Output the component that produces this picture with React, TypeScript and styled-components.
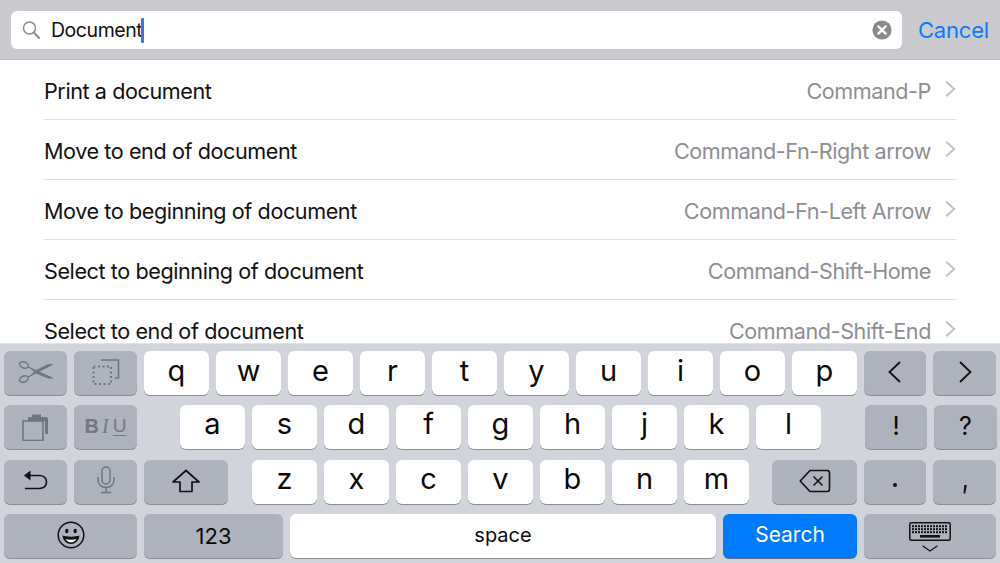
import React from "react";
import styled, { createGlobalStyle } from "styled-components";

const Global = createGlobalStyle`
  html, body { margin: 0; padding: 0; background: #fff; }
  #root { width: 1000px; height: 563px; overflow: hidden; }
  * { box-sizing: border-box; }
`;

const FONT = `Inter, "Liberation Sans", Arial, sans-serif`;

const Page = styled.div`
  width: 1000px;
  height: 563px;
  display: flex;
  flex-direction: column;
  overflow: hidden;
  font-family: ${FONT};
  color: #000;
`;

const SearchBar = styled.div`
  flex: 0 0 60px;
  height: 60px;
  background: #c9c9ce;
  border-bottom: 1px solid #bdbdc2;
  padding: 11px 0 10px 11px;
  display: flex;
  align-items: flex-start;
`;

const Field = styled.div`
  flex: 0 0 891px;
  height: 38px;
  background: #fff;
  border-radius: 6px;
  display: flex;
  align-items: center;
  padding: 0 10px 0 11px;
`;

const Query = styled.span`
  margin-left: 11px;
  font-size: 19.5px;
  letter-spacing: -0.45px;
  line-height: 24px;
  color: #111;
`;

const Caret = styled.span`
  width: 3px;
  height: 25px;
  background: #3f6ff0;
  border-radius: 1px;
  margin-left: -1px;
`;

const Clear = styled.span`
  margin-left: auto;
  display: flex;
`;

const Cancel = styled.span`
  margin-left: 16px;
  font-size: 22px;
  line-height: 38px;
  color: #0a7aff;
  letter-spacing: -0.2px;
`;

const List = styled.div`
  flex: 1 1 auto;
  min-height: 0;
  overflow: hidden;
  padding-left: 44px;
  padding-right: 44px;
  background: #fff;
`;

const Row = styled.div`
  height: 60px;
  display: flex;
  align-items: center;
  border-bottom: 1px solid #e1e1e3;
  padding-top: 2px;
`;

const RowTitle = styled.span`
  font-size: 21.6px;
  letter-spacing: -0.42px;
  color: #111;
`;

const RowValue = styled.span`
  margin-left: auto;
  font-size: 21.6px;
  letter-spacing: -0.42px;
  color: #8e8e93;
`;

const Chevron = styled.span`
  display: flex;
  margin-left: 14px;
  position: relative;
  top: -2px;
`;

const Keyboard = styled.div`
  flex: 0 0 220px;
  height: 220px;
  background: #d1d5db;
  border-top: 1px solid #e2e3e6;
  padding: 7px 4px 5px;
  display: flex;
  flex-direction: column;
  gap: 10.3px;
`;

const KeyRow = styled.div`
  display: flex;
  height: 44px;
`;

const Group = styled.div<{ $ml?: number; $gap?: number }>`
  display: flex;
  gap: ${(p) => p.$gap ?? 7}px;
  margin-left: ${(p) => p.$ml ?? 0}px;
`;

const Key = styled.div<{ $w: number; $dark?: boolean; $blue?: boolean; $size?: number; $pb?: number }>`
  width: ${(p) => p.$w}px;
  height: 44px;
  border-radius: 6px;
  display: flex;
  align-items: center;
  justify-content: center;
  font-size: ${(p) => p.$size ?? 29}px;
  font-weight: 400;
  color: ${(p) => (p.$blue ? "#fff" : "#0a0a0a")};
  background: ${(p) => (p.$blue ? "#007aff" : p.$dark ? "#adb2bc" : "#fff")};
  box-shadow: 0 1px 0 ${(p) => (p.$blue ? "#5f6b80" : "#8b8d92")};
  padding-bottom: ${(p) => p.$pb ?? 5}px;
`;

const Faded = styled.span`
  display: flex;
  opacity: 0.95;
`;

const Row1Letters = "qwertyuiop".split("");
const Row2Letters = "asdfghjkl".split("");
const Row3Letters = "zxcvbnm".split("");

const rows: [string, string][] = [
  ["Print a document", "Command-P"],
  ["Move to end of document", "Command-Fn-Right arrow"],
  ["Move to beginning of document", "Command-Fn-Left Arrow"],
  ["Select to beginning of document", "Command-Shift-Home"],
  ["Select to end of document", "Command-Shift-End"],
];

const Lens = () => (
  <svg width="18" height="20" viewBox="0 0 18 20" fill="none" stroke="#8a8a8e" strokeWidth="1.5">
    <circle cx="7.5" cy="8" r="6" />
    <path d="M11.8 12.4 L17 18" strokeWidth="1.9" strokeLinecap="round" />
  </svg>
);

const ClearIcon = () => (
  <svg width="20" height="20" viewBox="0 0 20 20">
    <circle cx="10" cy="10" r="9.6" fill="#8a8a8e" />
    <path d="M6.4 6.4 L13.6 13.6 M13.6 6.4 L6.4 13.6" stroke="#fff" strokeWidth="2.4" strokeLinecap="round" />
  </svg>
);

const ChevronIcon = () => (
  <svg width="11" height="16" viewBox="0 0 11 16" fill="none" stroke="#c4c4c8" strokeWidth="2">
    <path d="M1.2 0.8 L9.2 8 L1.2 15.2" />
  </svg>
);

const Scissors = () => (
  <svg width="36" height="24" viewBox="0 0 36 24" fill="none" stroke="#71757f" strokeWidth="1.5">
    <ellipse cx="6" cy="5" rx="4.6" ry="2.9" transform="rotate(22 6 5)" />
    <ellipse cx="6" cy="19" rx="4.6" ry="2.9" transform="rotate(-22 6 19)" />
    <path d="M10.3 7 L34.5 18 L30 18 L17 12.6" strokeWidth="1" fill="#71757f" />
    <path d="M10.3 17 L34.5 4.5 L30 4.8 L17 11" strokeWidth="1" fill="#71757f" />
  </svg>
);

const CopyIcon = () => (
  <svg width="28" height="28" viewBox="0 0 28 28" fill="none" stroke="#71757f">
    <path d="M9 2 H26.5 V20 H23" strokeWidth="1.5" />
    <rect x="1.5" y="8.5" width="17.5" height="17.5" strokeWidth="2" strokeDasharray="2 2.5" />
  </svg>
);

const PasteIcon = () => (
  <svg width="27" height="28" viewBox="0 0 27 28" fill="none">
    <path d="M6 4 H10 V1.5 H19 V4 H24 C25.5 4 26 5 26 6 V21 H23 V8 H6 Z" fill="#71757f" />
    <rect x="1" y="8" width="20" height="19.5" stroke="#71757f" strokeWidth="1.6" fill="#adb2bc" />
  </svg>
);

const BoldLetter = styled.span`
  font-family: "Liberation Sans", Arial, sans-serif;
  font-weight: 700;
  font-size: 20px;
  color: #71757f;
`;
const ItalicLetter = styled.span`
  font-family: "Liberation Serif", serif;
  font-style: italic;
  font-size: 20px;
  margin: 0 4px 0 3px;
  color: #71757f;
`;
const UnderLetter = styled.span`
  font-family: "Liberation Sans", Arial, sans-serif;
  font-size: 19px;
  color: #71757f;
  text-decoration: underline;
  text-underline-offset: 3px;
  text-decoration-thickness: 1px;
`;

const Undo = () => (
  <svg width="26" height="24" viewBox="0 0 26 24" fill="none" stroke="#111" strokeWidth="1.6">
    <path d="M2 20.5 H16 C21 20.5 23.5 17.5 23.5 14 C23.5 10.5 21 7.5 16 7.5 H5" />
    <path d="M1 7.5 L7.5 2.5 V12.5 Z" fill="#111" stroke="none" />
  </svg>
);

const Mic = () => (
  <svg width="18" height="28" viewBox="0 0 18 28" fill="none" stroke="#71757f" strokeWidth="1.5">
    <rect x="5" y="1" width="8" height="17" rx="4" />
    <path d="M1 11 V14 C1 19 5 21.5 9 21.5 C13 21.5 17 19 17 14 V11" />
    <path d="M9 21.5 V26.5 M4 26.5 H14" />
  </svg>
);

const Shift = () => (
  <svg width="28" height="24" viewBox="0 0 28 24" fill="none" stroke="#111" strokeWidth="1.7" strokeLinejoin="round">
    <path d="M14 1.5 L27 13 H20 V22.5 H8 V13 H1 Z" />
  </svg>
);

const Smiley = () => (
  <svg width="28" height="28" viewBox="0 0 28 28" fill="none" stroke="#111" strokeWidth="1.5">
    <circle cx="14" cy="14" r="12.8" />
    <ellipse cx="9.8" cy="10" rx="1.7" ry="2.2" fill="#111" stroke="none" />
    <ellipse cx="18.2" cy="10" rx="1.7" ry="2.2" fill="#111" stroke="none" />
    <path d="M5.5 14.5 C9 16 19 16 22.5 14.5 C22 20 18 23 14 23 C10 23 6 20 5.5 14.5 Z" fill="#111" stroke="none" />
    <path d="M8.5 18 C11 19 17 19 19.5 18 C18 20.5 16 21.3 14 21.3 C12 21.3 10 20.5 8.5 18 Z" fill="#fff" stroke="none" />
  </svg>
);

const Angle = ({ right }: { right?: boolean }) => (
  <svg width="14" height="22" viewBox="0 0 14 22" fill="none" stroke="#111" strokeWidth="1.8">
    <path d={right ? "M2 1 L12.5 11 L2 21" : "M12 1 L1.5 11 L12 21"} />
  </svg>
);

const Backspace = () => (
  <svg width="32" height="24" viewBox="0 0 32 24" fill="none" stroke="#111" strokeWidth="1.6" strokeLinejoin="round">
    <path d="M11 1.5 H28 C29.5 1.5 30.5 2.5 30.5 4 V20 C30.5 21.5 29.5 22.5 28 22.5 H11 L1.2 12 Z" />
    <path d="M14.5 7.5 L23.5 16.5 M23.5 7.5 L14.5 16.5" strokeWidth="1.5" />
  </svg>
);

const Period = styled.span`
  width: 4px;
  height: 4px;
  border-radius: 50%;
  background: #111;
  display: block;
  margin-top: 12px;
`;

const CommaMark = styled.svg`
  margin-top: 20px;
`;

const Comma = () => (
  <CommaMark width="4" height="9" viewBox="0 0 4 9">
    <path d="M1.3 0 H3.8 L2.2 8.5 H0.5 Z" fill="#111" />
  </CommaMark>
);

const Dismiss = styled.span`
  display: flex;
  flex-direction: column;
  align-items: center;
  gap: 4px;
  margin-top: 3px;
`;

const KeyboardGlyph = () => {
  const cells: React.ReactNode[] = [];
  for (let r = 0; r < 3; r++) {
    for (let c = 0; c < 12; c++) {
      cells.push(<rect key={`${r}-${c}`} x={3 + c * 3} y={3.2 + r * 3} width="2" height="2" fill="#111" />);
    }
  }
  return (
    <svg width="42" height="19" viewBox="0 0 42 19" fill="none">
      <rect x="0.8" y="0.8" width="40.4" height="17.4" rx="1.5" stroke="#111" strokeWidth="1.5" />
      {cells}
      <rect x="11" y="13" width="20" height="2.6" fill="#111" />
    </svg>
  );
};

const Down = () => (
  <svg width="16" height="7" viewBox="0 0 16 7" fill="none" stroke="#111" strokeWidth="1.1">
    <path d="M0.5 0.8 L8 6 L15.5 0.8" />
  </svg>
);

export default function App() {
  return (
    <Page>
      <Global />
      <SearchBar>
        <Field>
          <Lens />
          <Query>Document</Query>
          <Caret />
          <Clear>
            <ClearIcon />
          </Clear>
        </Field>
        <Cancel>Cancel</Cancel>
      </SearchBar>
      <List>
        {rows.map(([t, v]) => (
          <Row key={t}>
            <RowTitle>{t}</RowTitle>
            <RowValue>{v}</RowValue>
            <Chevron>
              <ChevronIcon />
            </Chevron>
          </Row>
        ))}
      </List>
      <Keyboard>
        <KeyRow>
          <Group>
            <Key $w={63} $dark $pb={3}><Scissors /></Key>
            <Key $w={63} $dark $pb={3}><CopyIcon /></Key>
          </Group>
          <Group $ml={7}>
            {Row1Letters.map((l) => (
              <Key key={l} $w={65}>{l}</Key>
            ))}
          </Group>
          <Group $ml={7}>
            <Key $w={62} $dark $pb={2}><Angle /></Key>
            <Key $w={63} $dark $pb={2}><Angle right /></Key>
          </Group>
        </KeyRow>
        <KeyRow>
          <Group>
            <Key $w={63} $dark $pb={1}><PasteIcon /></Key>
            <Key $w={63} $dark $pb={1}>
              <Faded>
                <BoldLetter>B</BoldLetter>
                <ItalicLetter>I</ItalicLetter>
                <UnderLetter>U</UnderLetter>
              </Faded>
            </Key>
          </Group>
          <Group $ml={43}>
            {Row2Letters.map((l) => (
              <Key key={l} $w={65} $pb={7}>{l}</Key>
            ))}
          </Group>
          <Group $ml={44}>
            <Key $w={62} $dark $size={25} $pb={3}>!</Key>
            <Key $w={63} $dark $size={25} $pb={3}>?</Key>
          </Group>
        </KeyRow>
        <KeyRow>
          <Group>
            <Key $w={63} $dark $pb={3}><Undo /></Key>
            <Key $w={63} $dark $pb={3}><Mic /></Key>
            <Key $w={84} $dark $pb={2}><Shift /></Key>
          </Group>
          <Group $ml={24}>
            {Row3Letters.map((l) => (
              <Key key={l} $w={65} $pb={7}>{l}</Key>
            ))}
          </Group>
          <Group $ml={23}>
            <Key $w={85} $dark $pb={2}><Backspace /></Key>
            <Key $w={62} $dark><Period /></Key>
            <Key $w={63} $dark><Comma /></Key>
          </Group>
        </KeyRow>
        <KeyRow>
          <Group>
            <Key $w={133} $dark $pb={1}><Smiley /></Key>
            <Key $w={139} $dark $size={22} $pb={0}>123</Key>
            <Key $w={426} $size={20} $pb={1}>space</Key>
            <Key $w={134} $blue $size={21} $pb={3}>Search</Key>
            <Key $w={132} $dark $pb={0}>
              <Dismiss>
                <KeyboardGlyph />
                <Down />
              </Dismiss>
            </Key>
          </Group>
        </KeyRow>
      </Keyboard>
    </Page>
  );
}
